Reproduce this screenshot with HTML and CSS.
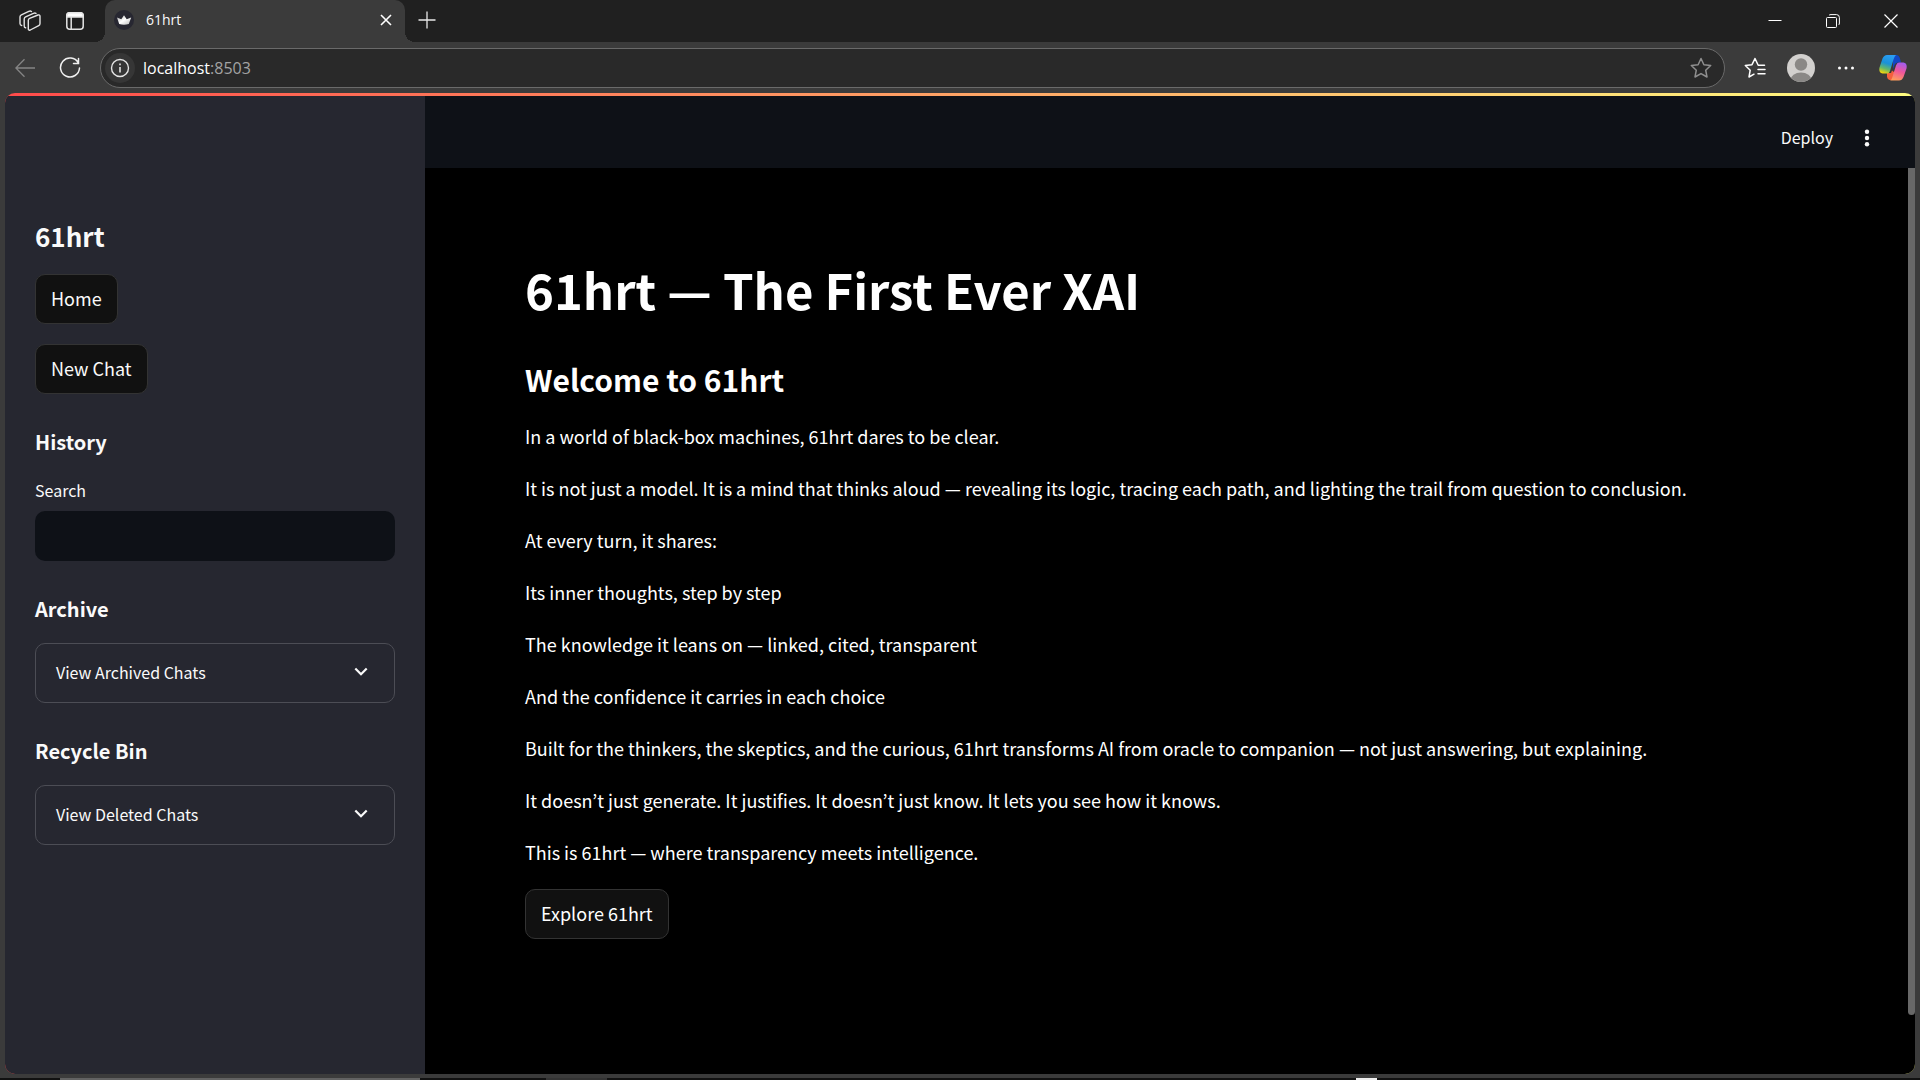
FILE: index.html
```html
<!DOCTYPE html>
<html lang="en">
<head>
<meta charset="utf-8">
<meta name="viewport" content="width=device-width, initial-scale=1">
<title>61hrt</title>
<link rel="stylesheet" href="styles.css">
</head>
<body>
<div class="tabstrip">
  <div class="strip-tools">
    <button class="icon-btn" aria-label="Workspaces">
      <svg width="24" height="24" viewBox="0 0 24 24" fill="none" stroke="#e4e4e4" stroke-width="1.4" stroke-linejoin="round" stroke-linecap="round">
        <path d="M10.3 11.2 Q10.4 9.9 11.6 9.4 L20 6 Q22 5.500 22 7.200 V14.500 Q22 16 20.700 16.700 L12.300 21 Q10.300 21.700 10.300 19.700 Z"/>
        <path d="M7.600 18.800 Q6.200 18.500 6.200 17 V10 Q6.300 8.500 7.600 7.900 L15.500 4.300 Q17 3.700 18 4.400"/>
        <path d="M3.700 16.500 Q2 16.200 2 14.500 V7.900 Q2.100 6.400 3.400 5.800 L10.800 2.400 Q12.300 1.700 13.500 2.500"/>
      </svg>
    </button>
    <button class="icon-btn" aria-label="Tab actions">
      <svg width="24" height="24" viewBox="0 0 24 24" fill="none" stroke="#e4e4e4" stroke-width="1.500">
        <rect x="3.800" y="3.800" width="16.400" height="16.400" rx="3"/>
        <path d="M3.800 8V6.500Q4 3.800 6.500 3.800H17.500Q20 4 20.200 6.500V8Z" fill="#fff"/>
        <path d="M8.200 8V20"/>
      </svg>
    </button>
  </div>
  <div class="tab">
    <svg width="20" height="20" viewBox="0 0 20 20">
      <defs><linearGradient id="crown" x1="0" y1="0" x2="1" y2="1"><stop offset="0" stop-color="#aaa"/><stop offset=".5" stop-color="#fff"/><stop offset="1" stop-color="#bbb"/></linearGradient></defs>
      <circle cx="10" cy="10" r="10" fill="#272731"/>
      <path d="M3 7.500L7.300 9.200L10 5.200L12.700 9.200L17.200 7.500L14.800 14Q10 15.300 5.200 14Z" fill="url(#crown)"/>
    </svg>
    <span class="tab-title">61hrt</span>
    <button class="icon-btn tab-close" aria-label="Close tab">
      <svg width="12" height="12" viewBox="0 0 12 12" stroke="#fff" stroke-width="1.600"><path d="M1 1L11 11M11 1L1 11"/></svg>
    </button>
  </div>
  <button class="icon-btn new-tab" aria-label="New tab">
    <svg width="18" height="18" viewBox="0 0 18 18" stroke="#e8e8e8" stroke-width="1.300"><path d="M9 .5V17.500M.5 9H17.500"/></svg>
  </button>
  <div class="window-controls">
    <button class="win-btn" aria-label="Minimize"><svg width="14" height="14" viewBox="0 0 14 14" stroke="#fff"><path d="M.5 6.500H13.500"/></svg></button>
    <button class="win-btn" aria-label="Restore"><svg width="14" height="14" viewBox="0 0 14 14" fill="none" stroke="#fff"><rect x=".5" y="3.500" width="10" height="10" rx="1"/><path d="M3 1.300Q3.500 .6 5 .6H10.500Q13.400 .6 13.400 3.600V9Q13.400 10.500 12.600 11"/></svg></button>
    <button class="win-btn" aria-label="Close"><svg width="14" height="14" viewBox="0 0 14 14" stroke="#fff" stroke-width="1.200"><path d="M.5 .5L13.500 13.500M13.500 .5L.5 13.500"/></svg></button>
  </div>
</div>

<div class="toolbar">
  <button class="icon-btn nav-btn" aria-label="Back">
    <svg width="20" height="20" viewBox="0 0 20 20" fill="none" stroke="#858585" stroke-width="1.300"><path d="M20 10H1M9.500 1.300L.9 10L9.500 18.700"/></svg>
  </button>
  <button class="icon-btn nav-btn" aria-label="Refresh">
    <svg width="22" height="22" viewBox="0 0 22 22" fill="none" stroke="#f0f0f0" stroke-width="1.500" stroke-linecap="round"><path d="M19.300 5.800A9.500 9.500 0 1 0 20.500 11M19.500 1.500V6.500H14.500"/></svg>
  </button>
  <div class="address">
    <button class="icon-btn site-info" aria-label="Site information">
      <svg width="20" height="20" viewBox="0 0 20 20" fill="none" stroke="#e4e4e4" stroke-width="1.400"><circle cx="10" cy="10" r="8.500"/><path d="M10 9V14.500M10 5.500V7.200" stroke-width="1.600"/></svg>
    </button>
    <a class="url" href="#">localhost<span class="port">:8503</span></a>
    <button class="icon-btn" aria-label="Add to favorites">
      <svg width="22" height="22" viewBox="0 0 22 22" fill="none" stroke="#8f8f8f" stroke-width="1.500" stroke-linejoin="round"><path d="M11 1.500L13.900 7.700L20.700 8.500L15.700 13.200L17 20L11 16.600L5 20L6.300 13.200L1.300 8.500L8.100 7.700Z"/></svg>
    </button>
  </div>
  <div class="toolbar-actions">
    <button class="icon-btn" aria-label="Favorites">
      <svg width="22" height="22" viewBox="0 0 22 22" fill="none" stroke="#fff" stroke-width="1.500" stroke-linejoin="round" stroke-linecap="round"><path d="M20.500 8.300H14.200L11 1.500L8 7.700L1.300 8.500L6.200 13.200L5 20L10 17.200M14 12.500H21M14 16.800H21"/></svg>
    </button>
    <button class="icon-btn" aria-label="Profile">
      <svg width="28" height="28" viewBox="0 0 28 28"><defs><clipPath id="disc"><circle cx="14" cy="14" r="14"/></clipPath></defs><g clip-path="url(#disc)"><rect width="28" height="28" fill="#d2d0ce"/><circle cx="14" cy="10.500" r="6.200" fill="#8a8886"/><ellipse cx="14" cy="26" rx="10.500" ry="7.500" fill="#8a8886"/></g></svg>
    </button>
    <button class="icon-btn" aria-label="Settings and more">
      <svg width="22" height="18" viewBox="0 0 22 18" fill="#fff"><circle cx="3.500" cy="9" r="1.500"/><circle cx="10" cy="9" r="1.500"/><circle cx="16.500" cy="9" r="1.500"/></svg>
    </button>
    <button class="icon-btn" aria-label="Copilot">
      <svg width="28" height="28" viewBox="0 0 28 28">
        <defs>
          <linearGradient id="cp1" x1=".6" y1="0" x2=".3" y2="1"><stop offset="0" stop-color="#2a9df4"/><stop offset=".45" stop-color="#1a91d8"/><stop offset=".75" stop-color="#65b868"/><stop offset="1" stop-color="#f2d50c"/></linearGradient>
          <linearGradient id="cp2" x1=".7" y1="0" x2=".4" y2="1"><stop offset="0" stop-color="#a15cf0"/><stop offset=".5" stop-color="#f0569a"/><stop offset="1" stop-color="#ff9c5c"/></linearGradient>
        </defs>
        <path d="M14 1H18Q20 1.300 20.800 4L22 8.500H19Q16.500 8.500 15.500 11L14 15Z" fill="#1247c4"/>
        <path d="M8 19H12L13 16.500L15 18L15 26H10.500Q8.500 25.500 8 23Z" fill="#f4603d"/>
        <path d="M8 1H17Q15.500 2 14.500 5.500L11 17Q10.200 19.500 8 19.500H3.500Q-.5 19 .5 13.500L3.500 4.500Q5 1 8 1Z" fill="url(#cp1)"/>
        <path d="M20 8.500H24.500Q28.500 9 27.500 14.500L24.500 23Q23 26.500 20 26.500H11Q12.700 26 13.700 22L17 11.500Q18 8.500 20 8.500Z" fill="url(#cp2)"/>
      </svg>
    </button>
  </div>
</div>

<div class="viewport">
  <div class="app">
    <aside class="sidebar">
      <h2 class="side-title">61hrt</h2>
      <div class="side-buttons">
        <button class="btn">Home</button>
        <button class="btn">New Chat</button>
      </div>
      <section class="side-section">
        <h3>History</h3>
        <label class="search-label" for="search">Search</label>
        <input class="search" id="search" type="text">
      </section>
      <section class="side-section">
        <h3>Archive</h3>
        <button class="expander" aria-expanded="false">View Archived Chats
          <svg width="14" height="10" viewBox="0 0 14 10" fill="none" stroke="#fafafa" stroke-width="2.200"><path d="M1.300 1.500L7 7.200L12.700 1.500"/></svg>
        </button>
      </section>
      <section class="side-section">
        <h3>Recycle Bin</h3>
        <button class="expander" aria-expanded="false">View Deleted Chats
          <svg width="14" height="10" viewBox="0 0 14 10" fill="none" stroke="#fafafa" stroke-width="2.200"><path d="M1.300 1.500L7 7.200L12.700 1.500"/></svg>
        </button>
      </section>
    </aside>
    <div class="content">
      <header class="app-header">
        <button class="deploy">Deploy</button>
        <button class="icon-btn" aria-label="Main menu">
          <svg width="20" height="20" viewBox="0 0 20 20" fill="#fafafa"><circle cx="10" cy="3.700" r="2.200"/><circle cx="10" cy="10" r="2.200"/><circle cx="10" cy="16.300" r="2.200"/></svg>
        </button>
      </header>
      <div class="scroll-row">
        <main class="main">
          <h1>61hrt — The First Ever XAI</h1>
          <h2>Welcome to 61hrt</h2>
          <p>In a world of black-box machines, 61hrt dares to be clear.</p>
          <p>It is not just a model. It is a mind that thinks aloud — revealing its logic, tracing each path, and lighting the trail from question to conclusion.</p>
          <p>At every turn, it shares:</p>
          <p>Its inner thoughts, step by step</p>
          <p>The knowledge it leans on — linked, cited, transparent</p>
          <p>And the confidence it carries in each choice</p>
          <p>Built for the thinkers, the skeptics, and the curious, 61hrt transforms AI from oracle to companion — not just answering, but explaining.</p>
          <p>It doesn’t just generate. It justifies. It doesn’t just know. It lets you see how it knows.</p>
          <p>This is 61hrt — where transparency meets intelligence.</p>
          <button class="btn">Explore 61hrt</button>
        </main>
        <div class="scroll-track"><div class="scroll-thumb"></div></div>
      </div>
    </div>
  </div>
</div>
<div class="taskbar"><span class="task-active"></span><span class="task-hover"></span><span class="task-light"></span></div>
</body>
</html>
```
FILE: styles.css
```css
* { box-sizing: border-box; }

body {
  margin: 0;
  height: 100vh;
  display: flex;
  flex-direction: column;
  overflow: hidden;
  background: #3b3b3b;
  color: #fafafa;
  font-family: "Noto Sans CJK KR", "Noto Sans", sans-serif;
  font-size: 18px;
  line-height: 30px;
}

button, input { font: inherit; color: inherit; }
svg { display: block; flex: none; }
h1, h2, h3, p { margin: 0; }

.icon-btn {
  display: flex;
  align-items: center;
  justify-content: center;
  padding: 0;
  border: 0;
  background: none;
}

/* Tab strip */
.tabstrip {
  display: flex;
  height: 42px;
  flex: none;
  background: #202020;
}
.strip-tools {
  display: flex;
  gap: 21px;
  width: 105px;
  padding: 0 0 1px 18px;
}
.tab {
  position: relative;
  display: flex;
  align-items: center;
  width: 300px;
  padding: 0 13px 2px 9px;
  background: #3b3b3b;
  border-radius: 10px 10px 0 0;
  font-family: "Open Sans", sans-serif;
  font-size: 14px;
}
/* Curved feet that join the active tab to the toolbar */
.tab::before, .tab::after {
  content: "";
  position: absolute;
  bottom: 0;
  width: 10px;
  height: 10px;
}
.tab::before { left: -10px; background: radial-gradient(circle at 0 0, #202020 10px, #3b3b3b 10px); }
.tab::after { right: -10px; background: radial-gradient(circle at 100% 0, #202020 10px, #3b3b3b 10px); }
.tab-title { flex: 1; margin-left: 12px; }
.new-tab { width: 44px; padding-bottom: 3px; }
.window-controls { display: flex; margin-left: auto; }
.win-btn {
  display: flex;
  align-items: center;
  justify-content: center;
  width: 58px;
  padding: 0;
  border: 0;
  background: none;
}

/* Toolbar */
.toolbar {
  display: flex;
  align-items: center;
  height: 51px;
  flex: none;
  padding: 0 13px 0 2px;
}
.nav-btn { width: 45px; height: 40px; }
.address {
  display: flex;
  flex: 1;
  align-items: center;
  height: 40px;
  margin-left: 8px;
  padding: 0 12px 0 4px;
  border: 1px solid #6a6a6a;
  border-radius: 20px;
  background: #292929;
}
.site-info {
  width: 30px;
  height: 30px;
  border-radius: 50%;
  background: #363636;
}
.url {
  flex: 1;
  margin-left: 8px;
  color: #fff;
  font-family: "Open Sans", sans-serif;
  font-size: 16px;
  text-decoration: none;
}
.port { color: #a3a3a3; }
.toolbar-actions {
  display: flex;
  align-items: center;
  gap: 21px;
  margin-left: 19px;
}

/* App viewport */
.viewport {
  display: flex;
  flex: 1;
  min-height: 0;
  padding: 0 5px 4px;
}
.app {
  display: flex;
  flex: 1;
  overflow: hidden;
  border-radius: 10px;
  background: linear-gradient(90deg, #ff4b4b, #fffd80);
  padding-top: 3px;
}
.sidebar {
  width: 420px;
  flex: none;
  padding: 122px 30px 0;
  background: #262730;
}
.side-title { font-size: 26px; line-height: 36px; font-weight: 700; }
.side-buttons {
  display: flex;
  flex-direction: column;
  align-items: flex-start;
  gap: 20px;
  margin-top: 20px;
}
.btn {
  height: 50px;
  padding: 0 15px 2px;
  border: 1px solid #333;
  border-radius: 10px;
  background: #111;
}
.side-section { margin-top: 32px; }
.side-section h3 {
  margin-bottom: 18px;
  font-size: 20px;
  line-height: 32px;
  font-weight: 700;
}
.search-label { display: block; font-size: 16px; line-height: 28px; }
.search {
  display: block;
  width: 100%;
  height: 50px;
  margin-top: 7px;
  padding: 0 12px;
  border: 0;
  border-radius: 10px;
  background: #0e1117;
}
.expander {
  display: flex;
  align-items: center;
  justify-content: space-between;
  width: 100%;
  height: 60px;
  padding: 0 26px 2px 20px;
  border: 1px solid #4c4d55;
  border-radius: 10px;
  background: none;
  font-size: 16px;
}

/* Main column */
.content {
  display: flex;
  flex: 1;
  flex-direction: column;
  min-width: 0;
  background: #000;
}
.app-header {
  display: flex;
  align-items: center;
  justify-content: flex-end;
  gap: 24px;
  height: 72px;
  flex: none;
  padding: 12px 38px 0 0;
  background: #0e1117;
}
.deploy { padding: 0 0 2px; border: 0; background: none; font-size: 16px; }
.scroll-row { display: flex; flex: 1; min-height: 0; }
.main {
  flex: 1;
  min-width: 0;
  padding: 88px 93px 0 100px;
  color: #fff;
}
.main h1 { font-size: 49px; line-height: 66px; font-weight: 700; }
.main h2 { margin-top: 35px; font-size: 30px; line-height: 44px; font-weight: 700; }
.main p { margin-bottom: 22px; }
.main h2 + p { margin-top: 20px; }
.scroll-track { width: 7px; padding-bottom: 59px; }
.scroll-thumb {
  height: 100%;
  border-radius: 0 0 4px 4px;
  background: #686868;
}

/* Top edge of the desktop taskbar */
.taskbar {
  display: flex;
  height: 2px;
  flex: none;
  background: #111;
}
.task-active { width: 360px; margin-left: 60px; background: #626262; }
.task-hover { width: 61px; margin-left: 126px; background: #333; }
.task-light { width: 21px; margin-left: 749px; background: #eee; }
```
